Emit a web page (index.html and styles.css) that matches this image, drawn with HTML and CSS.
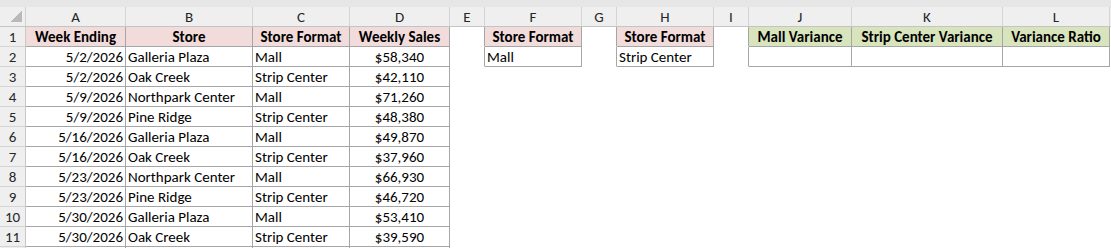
FILE: index.html
```html
<!DOCTYPE html>
<html>
<head>
<meta charset="utf-8">
<link rel="stylesheet" href="styles.css">
</head>
<body>
<div class="topbar"></div>
<div class="sheet">
  <div class="row colhdr">
    <div class="corner"><span class="tri"></span></div>
    <div>A</div><div>B</div><div>C</div><div>D</div><div>E</div><div>F</div><div>G</div><div>H</div><div>I</div><div>J</div><div>K</div><div>L</div><div></div>
  </div>
  <div class="row">
    <div class="rn">1</div>
    <div class="t hp">Week Ending</div><div class="t hp">Store</div><div class="t hp">Store Format</div><div class="t hp">Weekly Sales</div>
    <div class="vr"></div><div class="t hp">Store Format</div><div class="vr"></div><div class="t hp">Store Format</div><div class="vr"></div>
    <div class="t hg">Mall Variance</div><div class="t hg">Strip Center Variance</div><div class="t hg">Variance Ratio</div><div></div>
  </div>
  <div class="row">
    <div class="rn">2</div>
    <div class="t r">5/2/2026</div><div class="t">Galleria Plaza</div><div class="t">Mall</div><div class="t ctr">$58,340</div>
    <div class="vr"></div><div class="t">Mall</div><div class="vr"></div><div class="t">Strip Center</div><div class="vr"></div>
    <div class="t"></div><div class="t"></div><div class="t"></div><div></div>
  </div>
  <div class="row">
    <div class="rn">3</div>
    <div class="t r">5/2/2026</div><div class="t">Oak Creek</div><div class="t">Strip Center</div><div class="t ctr">$42,110</div>
  </div>
  <div class="row">
    <div class="rn">4</div>
    <div class="t r">5/9/2026</div><div class="t">Northpark Center</div><div class="t">Mall</div><div class="t ctr">$71,260</div>
  </div>
  <div class="row">
    <div class="rn">5</div>
    <div class="t r">5/9/2026</div><div class="t">Pine Ridge</div><div class="t">Strip Center</div><div class="t ctr">$48,380</div>
  </div>
  <div class="row">
    <div class="rn">6</div>
    <div class="t r">5/16/2026</div><div class="t">Galleria Plaza</div><div class="t">Mall</div><div class="t ctr">$49,870</div>
  </div>
  <div class="row">
    <div class="rn">7</div>
    <div class="t r">5/16/2026</div><div class="t">Oak Creek</div><div class="t">Strip Center</div><div class="t ctr">$37,960</div>
  </div>
  <div class="row">
    <div class="rn">8</div>
    <div class="t r">5/23/2026</div><div class="t">Northpark Center</div><div class="t">Mall</div><div class="t ctr">$66,930</div>
  </div>
  <div class="row">
    <div class="rn">9</div>
    <div class="t r">5/23/2026</div><div class="t">Pine Ridge</div><div class="t">Strip Center</div><div class="t ctr">$46,720</div>
  </div>
  <div class="row">
    <div class="rn">10</div>
    <div class="t r">5/30/2026</div><div class="t">Galleria Plaza</div><div class="t">Mall</div><div class="t ctr">$53,410</div>
  </div>
  <div class="row">
    <div class="rn">11</div>
    <div class="t r">5/30/2026</div><div class="t">Oak Creek</div><div class="t">Strip Center</div><div class="t ctr">$39,590</div>
  </div>
  <div class="row">
    <div class="rn"></div>
    <div class="vr"></div><div class="vr"></div><div class="vr"></div><div class="vr"></div>
  </div>
</div>
</body>
</html>
```
FILE: styles.css
```css
html, body {
  margin: 0;
  padding: 0;
  background: #ffffff;
  overflow: hidden;
}
body {
  font-family: Carlito, Calibri, Lato, "Liberation Sans", sans-serif;
  font-size: 15px;
  color: #000000;
}
.topbar {
  height: 7px;
  background: #e6e6e6;
}
.row {
  display: grid;
  grid-template-columns: 26px 100px 127px 97px 100px 35px 97px 35px 97px 35px 103px 151px 107px 1fr;
  height: 20px;
}
.row > div {
  box-sizing: border-box;
  height: 20px;
  border-right: 1px solid transparent;
  border-bottom: 1px solid transparent;
  line-height: 19px;
  padding: 1px 2px 0 2px;
  white-space: nowrap;
}
.colhdr > div {
  background: #efefef;
  border-right-color: #d4d4d4;
  border-bottom-color: #c4c4c4;
  text-align: center;
  color: #262626;
}
.row > .corner {
  display: flex;
  justify-content: flex-end;
  align-items: flex-end;
  padding: 0 3px 4px 0;
  border-right-color: #d0d0d0;
}
.tri {
  width: 12px;
  height: 12px;
  background: linear-gradient(to top left, #b9b9b9 50%, transparent 50%);
}
.row > .rn {
  background: #efefef;
  border-right-color: #c8c8c8;
  border-bottom-color: #d4d4d4;
  text-align: center;
  color: #262626;
}
.row > .t {
  border-right-color: #a6a6a6;
  border-bottom-color: #a6a6a6;
}
.row > .vr {
  border-right-color: #a6a6a6;
}
.row > .hp {
  background: #f2dcdb;
  font-weight: bold;
  text-align: center;
}
.row > .hg {
  background: #d8e4bc;
  font-weight: bold;
  text-align: center;
}
.row > .r {
  text-align: right;
}
.row > .ctr {
  text-align: center;
}
```
